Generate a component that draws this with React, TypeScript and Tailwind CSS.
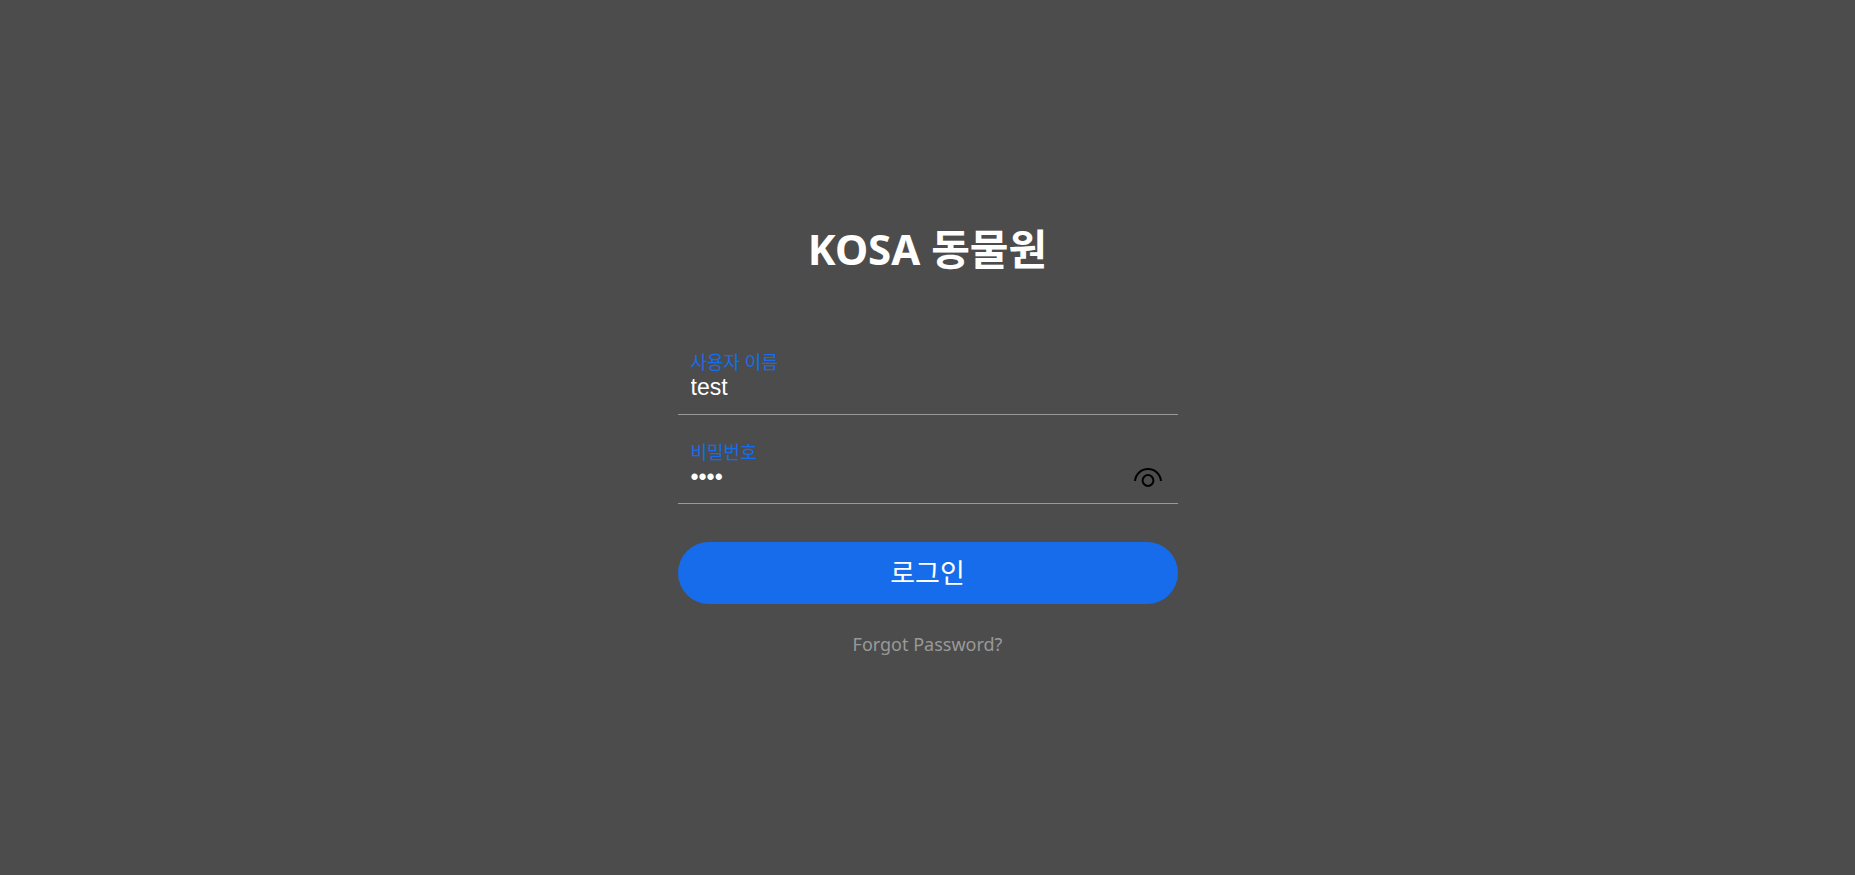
import { useState } from "react";

function EyeIcon() {
  return (
    <svg
      viewBox="0 0 28 20"
      className="h-5 w-7"
      fill="none"
      stroke="currentColor"
      strokeWidth="2"
    >
      <path d="M1 14C1.600 7.200 7 2 14 2s12.400 5.200 13 12" />
      <circle cx="14" cy="13.500" r="5.400" />
    </svg>
  );
}

function App() {
  const [username, setUsername] = useState("test");
  const [password, setPassword] = useState("test");
  const [visible, setVisible] = useState(false);

  return (
    <main className="flex min-h-screen flex-col items-center justify-center bg-[#4c4c4c] font-['Noto_Sans','Noto_Sans_CJK_KR',sans-serif]">
      <form
        className="flex w-full max-w-[500px] flex-col"
        onSubmit={(e) => e.preventDefault()}
      >
        <h1 className="mb-[70px] text-center text-[42px] leading-[60px] font-bold text-white">
          KOSA 동물원
        </h1>

        <div className="mb-6 flex h-[66px] flex-col border-b border-[#999] px-[13px]">
          <label htmlFor="username" className="text-lg leading-[26px] text-[#166cea]">
            사용자 이름
          </label>
          <input
            id="username"
            type="text"
            className="h-6 w-full bg-transparent font-['Liberation_Sans',sans-serif] text-[23px] text-white outline-none"
            value={username}
            onChange={(e) => setUsername(e.target.value)}
          />
        </div>

        <div className="mb-[38px] flex h-[65px] justify-between border-b border-[#999] px-[13px]">
          <div className="flex flex-1 flex-col">
            <label htmlFor="password" className="text-lg leading-[26px] text-[#166cea]">
              비밀번호
            </label>
            <input
              id="password"
              type={visible ? "text" : "password"}
              className="h-6 w-full bg-transparent font-['Liberation_Sans',sans-serif] text-[23px] text-white outline-none"
              value={password}
              onChange={(e) => setPassword(e.target.value)}
            />
          </div>
          <button
            type="button"
            aria-label="비밀번호 보기"
            className="mt-3 mr-[3px] cursor-pointer text-black"
            onClick={() => setVisible(!visible)}
          >
            <EyeIcon />
          </button>
        </div>

        <button
          type="submit"
          className="mb-7 h-[62px] cursor-pointer rounded-full bg-[#166cea] text-[27px] text-white"
        >
          로그인
        </button>

        <a href="#" className="self-center text-lg leading-6 text-[#999]">
          Forgot Password?
        </a>
      </form>
    </main>
  );
}

export default App;
